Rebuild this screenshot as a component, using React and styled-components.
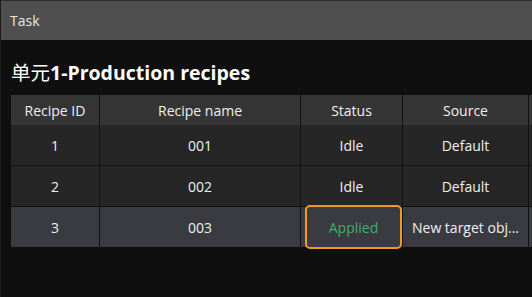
import React from 'react';
import styled, { createGlobalStyle } from 'styled-components';

const GlobalStyle = createGlobalStyle`
    html, body {
        margin: 0;
        padding: 0;
        background: #0f0f0f;
    }
    body {
        font-family: "Open Sans", "Noto Sans", "Noto Sans CJK SC", sans-serif;
    }
`

const Window = styled.div`
    width: 532px;
    height: 297px;
    background: #0f0f0f;
    border-left: 1px solid #1c1c1c;
    box-sizing: border-box;
    overflow: hidden;
    display: flex;
    flex-direction: column;
`
const TitleBar = styled.div`
    height: 40px;
    background: #4f4f4f;
    border-top: 1px solid #2e2e2e;
    box-sizing: border-box;
    display: flex;
    align-items: center;
    padding-left: 9px;
    color: #e8e8e8;
    font-size: 14px;
`
const Content = styled.div`
    padding: 20px 0 0 10px;
`
const Heading = styled.h1`
    margin: 0 0 10px 0;
    font-size: 19.5px;
    line-height: 24px;
    font-weight: 700;
    color: #ffffff;
    white-space: nowrap;
`
const Cjk = styled.span`
    font-family: "Noto Sans CJK SC", sans-serif;
    font-weight: 400;
`
const Table = styled.div`
    display: flex;
    flex-direction: column;
    gap: 1px;
    background: #111111;
    width: 640px;
`
const Row = styled.div`
    display: grid;
    grid-template-columns: 88px 200px 101px 125px 120px;
    gap: 1px;
    height: ${p => (p.$head ? 30 : 40)}px;
    margin-bottom: ${p => (p.$head ? -1 : 0)}px;
`
const Cell = styled.div`
    display: flex;
    align-items: center;
    justify-content: center;
    background: ${p => (p.$head ? '#353535' : p.$selected ? '#3a3b40' : '#262626')};
    color: #f0f0f0;
    font-size: 14px;
    white-space: nowrap;
    overflow: ${p => (p.$open ? 'visible' : 'hidden')};
    box-sizing: border-box;
    position: relative;
`
const StatusBox = styled.div`
    position: absolute;
    left: 4px;
    right: 0;
    top: -2px;
    bottom: -2px;
    border: 2px solid #f39a1d;
    border-radius: 5px;
    display: flex;
    align-items: center;
    justify-content: center;
    color: #3fae6e;
`

const columns = ['Recipe ID', 'Recipe name', 'Status', 'Source', '']

const rows = [
    { id: '1', name: '001', status: 'Idle', source: 'Default' },
    { id: '2', name: '002', status: 'Idle', source: 'Default' },
    { id: '3', name: '003', status: 'Applied', source: 'New target obj...', selected: true },
]

export default function App() {
    return (
        <Window>
            <GlobalStyle />
            <TitleBar>Task</TitleBar>
            <Content>
                <Heading><Cjk>单元</Cjk>1-Production recipes</Heading>
                <Table>
                    <Row $head>
                        {columns.map((c, i) => (
                            <Cell $head key={i}>{c}</Cell>
                        ))}
                    </Row>
                    {rows.map(r => (
                        <Row key={r.id}>
                            <Cell $selected={r.selected}>{r.id}</Cell>
                            <Cell $selected={r.selected}>{r.name}</Cell>
                            <Cell $selected={r.selected} $open>
                                {r.status === 'Applied'
                                    ? <StatusBox>{r.status}</StatusBox>
                                    : r.status}
                            </Cell>
                            <Cell $selected={r.selected}>{r.source}</Cell>
                            <Cell $selected={r.selected}></Cell>
                        </Row>
                    ))}
                </Table>
            </Content>
        </Window>
    );
}
